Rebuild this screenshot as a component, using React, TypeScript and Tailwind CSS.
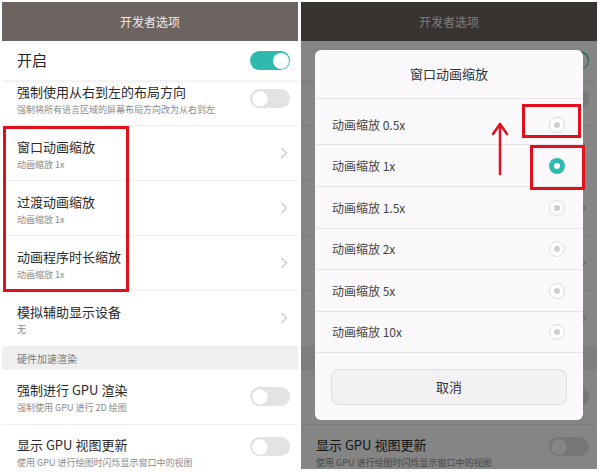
import React from "react";

function Toggle({ on }: { on?: boolean }) {
  return on ? (
    <div className="w-[40px] h-[19px] rounded-full bg-[#2fbab0] flex items-center justify-end pr-[1.5px] shrink-0">
      <div className="w-[16px] h-[16px] rounded-full bg-white" />
    </div>
  ) : (
    <div className="w-[40px] h-[19px] rounded-full bg-[#e3e3e3] flex items-center pl-[1.5px] shrink-0">
      <div className="w-[16px] h-[16px] rounded-full bg-white shadow-[0_0_1px_rgba(0,0,0,0.2)]" />
    </div>
  );
}

function Chevron() {
  return (
    <svg width="8" height="12" viewBox="0 0 8 12" className="shrink-0">
      <polyline points="1.5,1 6.5,6 1.5,11" fill="none" stroke="#cacaca" strokeWidth="1.2" />
    </svg>
  );
}

function Row({
  title,
  sub,
  right,
  h = "h-[55px]",
  pt = "pt-[13px]",
  border = true,
}: {
  title: string;
  sub: string;
  right: "toggle" | "chevron";
  h?: string;
  pt?: string;
  border?: boolean;
}) {
  return (
    <div
      className={`${h} flex items-start justify-between pl-[15px] ${
        right === "toggle" ? "pr-[8px]" : "pr-[10px]"
      } ${border ? "border-b border-[#efefef]" : ""}`}
    >
      <div className={`flex flex-col ${pt}`}>
        <div className="text-[13px] leading-[16px] text-[#2a2a2a]">{title}</div>
        <div className="text-[9px] leading-[12px] mt-[4px] text-[#8a8a8a]">{sub}</div>
      </div>
      <div className={`self-stretch flex items-center ${pt === "pt-[4px]" ? "pb-[8px]" : "pb-[1px]"}`}>
        {right === "toggle" ? <Toggle /> : <Chevron />}
      </div>
    </div>
  );
}

function SettingsList() {
  return (
    <div className="flex flex-col w-full h-full bg-white">
      <div className="h-[39px] bg-[#6d6360] flex items-center justify-center text-[12px] text-[#efebea]">
        开发者选项
      </div>
      <div className="h-[39px] flex items-center justify-between pl-[15px] pr-[8px] bg-white relative z-10 shadow-[0_2px_3px_rgba(0,0,0,0.06)]">
        <div className="text-[15px] text-[#222]">开启</div>
        <Toggle on />
      </div>
      <Row
        title="强制使用从右到左的布局方向"
        sub="强制将所有语言区域的屏幕布局方向改为从右到左"
        right="toggle"
        h="h-[46px]"
        pt="pt-[4px]"
      />
      <Row title="窗口动画缩放" sub="动画缩放 1x" right="chevron" />
      <Row title="过渡动画缩放" sub="动画缩放 1x" right="chevron" />
      <Row title="动画程序时长缩放" sub="动画缩放 1x" right="chevron" />
      <Row title="模拟辅助显示设备" sub="无" right="chevron" border={false} />
      <div className="h-[24px] bg-[#efefef] flex items-center pl-[15px] text-[10px] text-[#777]">
        硬件加速渲染
      </div>
      <Row title="强制进行 GPU 渲染" sub="强制使用 GPU 进行 2D 绘图" right="toggle" pt="pt-[12px]" />
      <Row
        title="显示 GPU 视图更新"
        sub="使用 GPU 进行绘图时闪烁显示窗口中的视图"
        right="toggle"
        h="h-[44px]"
        pt="pt-[12px]"
        border={false}
      />
    </div>
  );
}

function Radio({ selected }: { selected?: boolean }) {
  return selected ? (
    <div className="w-[16px] h-[16px] rounded-full bg-[#2fbab0] flex items-center justify-center shrink-0">
      <div className="w-[6px] h-[6px] rounded-full bg-white" />
    </div>
  ) : (
    <div className="w-[16px] h-[16px] rounded-full border border-[#dedede] bg-white flex items-center justify-center shrink-0">
      <div className="w-[6px] h-[6px] rounded-full bg-[#cfcfcf]" />
    </div>
  );
}

const options: { label: string; h: string; selected?: boolean; first?: boolean }[] = [
  { label: "动画缩放 0.5x", h: "h-[46px]", first: true },
  { label: "动画缩放 1x", h: "h-[42px]", selected: true },
  { label: "动画缩放 1.5x", h: "h-[42px]" },
  { label: "动画缩放 2x", h: "h-[41px]" },
  { label: "动画缩放 5x", h: "h-[42px]" },
  { label: "动画缩放 10x", h: "h-[41px]" },
];

export default function App() {
  return (
    <div className="w-[600px] h-[472px] bg-white flex gap-[3px] pl-[2px] pt-[2px] font-['Noto_Sans_CJK_SC','Noto_Sans',sans-serif]">
      <div className="relative w-[296px] h-[467px] overflow-hidden">
        <SettingsList />
        <div className="absolute z-20 left-[1px] top-[124px] w-[126px] h-[166px] border-[3px] border-[#e3101b]" />
      </div>
      <div className="relative w-[296px] h-[467px] overflow-hidden">
        <SettingsList />
        <div className="absolute z-20 inset-0 bg-black/[0.48]" />
        <div className="absolute z-30 left-[14px] top-[48px] w-[268px] h-[370px] rounded-[6px] bg-[#fbf9fb] flex flex-col">
          <div className="h-[49px] flex items-center justify-center text-[13px] text-[#333] border-b border-[#e8e6e8]">
            窗口动画缩放
          </div>
          {options.map((o) => (
            <div
              key={o.label}
              className={`${o.h} ${o.first ? "pt-[6px]" : ""} flex items-center justify-between pl-[17px] pr-[18px] border-b border-[#e8e6e8]`}
            >
              <span className="text-[12px] text-[#444]">{o.label}</span>
              <Radio selected={o.selected} />
            </div>
          ))}
          <div className="px-[16px] pt-[16px]">
            <div className="h-[36px] rounded-[8px] bg-[#f3f1f3] border border-[#dddbdd] flex items-center justify-center text-[13px] text-[#333]">
              取消
            </div>
          </div>
        </div>
        <div className="absolute z-40 left-[221px] top-[102px] w-[59px] h-[34px] border-[3px] border-[#e3101b]" />
        <div className="absolute z-40 left-[229px] top-[143px] w-[55px] h-[45px] border-[3px] border-[#e3101b]" />
        <svg className="absolute z-40 left-[190px] top-[119px]" width="18" height="56" viewBox="0 0 18 56">
          <polyline points="2,13 9,3 16,13" fill="none" stroke="#e3101b" strokeWidth="2.5" strokeLinecap="round" strokeLinejoin="round" />
          <line x1="9" y1="3" x2="9" y2="53" stroke="#e3101b" strokeWidth="2.5" strokeLinecap="round" />
        </svg>
      </div>
    </div>
  );
}
